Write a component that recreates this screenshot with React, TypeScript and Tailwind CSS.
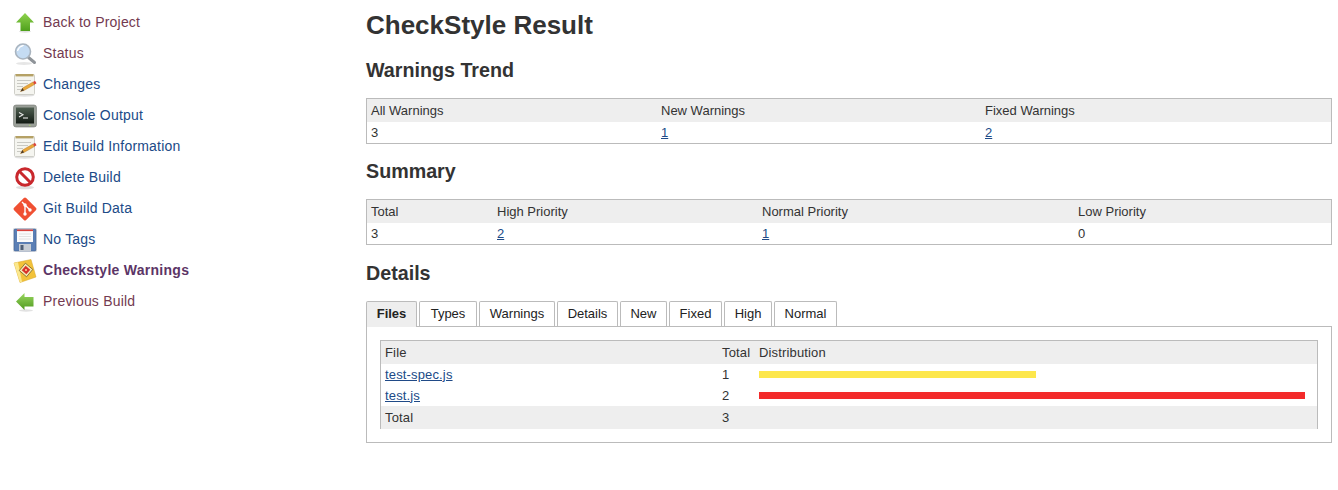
import React from 'react';

const UpArrow = () => (
  <svg width="24" height="24" viewBox="0 0 24 24">
    <defs>
      <linearGradient id="upGreen" x1="0" y1="0" x2="0" y2="1">
        <stop offset="0" stopColor="#8fd34e" />
        <stop offset="1" stopColor="#4fa01c" />
      </linearGradient>
    </defs>
    <ellipse cx="12" cy="20.5" rx="6" ry="1.2" fill="#e0e0e0" />
    <path d="M12 2 L21 11.5 L17 11.5 L17 20 L7.5 20 L7.5 11.5 L3 11.5 Z" fill="url(#upGreen)" />
  </svg>
);

const LeftArrow = () => (
  <svg width="24" height="24" viewBox="0 0 24 24">
    <defs>
      <linearGradient id="leftGreen" x1="0" y1="0" x2="0" y2="1">
        <stop offset="0" stopColor="#9ad760" />
        <stop offset="1" stopColor="#4f9a1f" />
      </linearGradient>
    </defs>
    <ellipse cx="13" cy="20.5" rx="7" ry="1.2" fill="#e2e2e2" />
    <path d="M3 11.5 L11.5 3 L11.5 7 L20.5 7 L20.5 16.5 L11.5 16.5 L11.5 20 Z" fill="url(#leftGreen)" />
  </svg>
);

const Search = () => (
  <svg width="24" height="24" viewBox="0 0 24 24">
    <ellipse cx="11" cy="21.5" rx="8" ry="1.5" fill="#e6e6e6" />
    <path d="M15.5 15.5 L21.5 20.5" stroke="#8f9499" strokeWidth="3" strokeLinecap="round" />
    <circle cx="10" cy="9.5" r="7.5" fill="#c5dcf3" stroke="#a9b4bf" strokeWidth="1.6" />
    <path d="M4.5 9 A6 6 0 0 1 10.5 3.5 A8 8 0 0 0 4.5 9 Z" fill="#ffffff" stroke="#ffffff" strokeWidth="1" />
  </svg>
);

const Notepad = () => (
  <svg width="24" height="24" viewBox="0 0 24 24">
    <ellipse cx="11.5" cy="22.5" rx="10" ry="1.2" fill="#e0e0e0" />
    <rect x="1.5" y="1.5" width="20" height="20" rx="1" fill="#f5f5f0" stroke="#c4c4bc" strokeWidth="0.8" />
    <rect x="2.5" y="1" width="18" height="2.4" fill="#b5a165" />
    <path d="M4 7.5 H18 M4 10.5 H15 M4 13.5 H10 M4 16.5 H8" stroke="#c9c9c3" strokeWidth="1" />
    <path d="M7.5 18.5 L9.5 15 L20 9 L21.5 11.5 L11 17.5 Z" fill="#eaa83c" stroke="#a9701f" strokeWidth="0.4" />
    <path d="M20 9 L21.5 11.5 L23.5 10.3 L22 7.8 Z" fill="#d9453a" />
    <path d="M7.5 18.5 L9.5 15 L11 17.5 Z" fill="#4a3a2a" />
  </svg>
);

const Terminal = () => (
  <svg width="24" height="24" viewBox="0 0 24 24">
    <defs>
      <linearGradient id="screen" x1="0" y1="0" x2="0" y2="1">
        <stop offset="0" stopColor="#4e5e50" />
        <stop offset="1" stopColor="#121a14" />
      </linearGradient>
    </defs>
    <rect x="0.5" y="1" width="23" height="22" rx="2.5" fill="#9a9f98" stroke="#777b75" strokeWidth="0.6" />
    <rect x="3" y="3.5" width="18" height="16" fill="url(#screen)" />
    <path d="M6 8.5 L10 10.8 L6 13" fill="none" stroke="#e8e8e8" strokeWidth="1.1" />
    <path d="M10 14 H15" stroke="#e8e8e8" strokeWidth="1.1" />
    <rect x="16" y="20.8" width="1.5" height="1" fill="#a8d46a" />
  </svg>
);

const NoEntry = () => (
  <svg width="24" height="24" viewBox="0 0 24 24">
    <ellipse cx="12" cy="21.5" rx="9" ry="1.8" fill="#e0e0e0" />
    <circle cx="12" cy="11" r="8.3" fill="#ffffff" stroke="#c9282d" strokeWidth="3" />
    <path d="M6.3 5.3 L17.7 16.7" stroke="#c9282d" strokeWidth="3" />
  </svg>
);

const GitLogo = () => (
  <svg width="24" height="24" viewBox="0 0 24 24">
    <rect x="3.5" y="3.5" width="17" height="17" rx="1.6" transform="rotate(45 12 12)" fill="#f05033" />
    <path d="M9 5 L17.5 13.5 M12 8 V17" stroke="#ffffff" strokeWidth="1.4" fill="none" />
    <circle cx="12" cy="8" r="1.7" fill="#ffffff" />
    <circle cx="17" cy="13" r="1.7" fill="#ffffff" />
    <circle cx="12" cy="17" r="1.7" fill="#ffffff" />
  </svg>
);

const Floppy = () => (
  <svg width="24" height="24" viewBox="0 0 24 24">
    <rect x="0" y="0" width="24" height="24" fill="#ececec" />
    <rect x="1" y="1" width="22" height="22" rx="1" fill="#5b7fb5" stroke="#3f5f92" strokeWidth="0.6" />
    <rect x="4" y="1.5" width="16" height="12.5" fill="#fbfbfb" />
    <rect x="4" y="1.5" width="16" height="1.6" fill="#d9403a" />
    <path d="M6 6 H18 M6 8.5 H18 M6 11 H18" stroke="#dcdcdc" strokeWidth="0.8" />
    <rect x="6" y="16" width="12" height="7" fill="#c6ccd4" />
    <rect x="7.5" y="17" width="3" height="5" fill="#4f5f76" />
  </svg>
);

const Checkstyle = () => (
  <svg width="24" height="24" viewBox="0 0 24 24">
    <path d="M1 4 L18 0.5 L23 18 L7 23.5 Z" fill="#f2c23a" stroke="#d6a526" strokeWidth="0.5" />
    <path d="M1 4 L5 3.2 L9 22.8 L7 23.5 Z" fill="#fbe88e" />
    <rect x="8.2" y="6.2" width="9.6" height="9.6" transform="rotate(40 13 11)" fill="#f6e9b4" stroke="#6b5a26" strokeWidth="0.7" />
    <rect x="10" y="8" width="6" height="6" transform="rotate(40 13 11)" fill="#d8322c" />
    <circle cx="13" cy="11" r="0.9" fill="#ffe9a0" />
  </svg>
);

const navItems = [
  { label: 'Back to Project', icon: <UpArrow />, color: 'text-[#733a50] tracking-[0.2px]' },
  { label: 'Status', icon: <Search />, color: 'text-[#733a50] tracking-[0.2px]' },
  { label: 'Changes', icon: <Notepad />, color: 'text-[#204a87] tracking-[0.2px]' },
  { label: 'Console Output', icon: <Terminal />, color: 'text-[#204a87] tracking-[0.2px]' },
  { label: 'Edit Build Information', icon: <Notepad />, color: 'text-[#204a87] tracking-[0.2px]' },
  { label: 'Delete Build', icon: <NoEntry />, color: 'text-[#204a87] tracking-[0.2px]' },
  { label: 'Git Build Data', icon: <GitLogo />, color: 'text-[#204a87] tracking-[0.2px]' },
  { label: 'No Tags', icon: <Floppy />, color: 'text-[#204a87] tracking-[0.2px]' },
  { label: 'Checkstyle Warnings', icon: <Checkstyle />, color: 'text-[#5c3566] font-bold tracking-[0.27px]' },
  { label: 'Previous Build', icon: <LeftArrow />, color: 'text-[#733a50] tracking-[0.2px]' },
];

const tabs = [
  { label: 'Types', width: 'w-[58px]' },
  { label: 'Warnings', width: 'w-[76px]' },
  { label: 'Details', width: 'w-[61px]' },
  { label: 'New', width: 'w-[47px]' },
  { label: 'Fixed', width: 'w-[53px]' },
  { label: 'High', width: 'w-[48px]' },
  { label: 'Normal', width: 'w-[63px]' },
];

const StatLink = ({ children }: { children: React.ReactNode }) => (
  <a href="#" className="text-[#204a87] underline">{children}</a>
);

const StatTable = ({ cols, head, row }: { cols: string; head: string[]; row: React.ReactNode[] }) => (
  <div className="border border-[#bbbbbb] text-[13px] text-[#333333]">
    <div className={`grid ${cols} h-[23px] items-center bg-[#eeeeee]`}>
      {head.map((h) => <div key={h} className="pl-[4px]">{h}</div>)}
    </div>
    <div className={`grid ${cols} h-[21px] items-center bg-white`}>
      {row.map((c, i) => <div key={i} className="pl-[4px]">{c}</div>)}
    </div>
  </div>
);

export default function App() {
  return (
    <div className="flex h-[490px] w-[1338px] overflow-hidden bg-white font-['Liberation_Sans',Arial,sans-serif] text-[14px] text-[#333333]">
      <aside className="w-[366px] shrink-0 pl-[13px] pt-[7px]">
        {navItems.map((item) => (
          <div key={item.label} className="flex h-[31px] items-center gap-[6px]">
            <span className="flex h-[24px] w-[24px] shrink-0">{item.icon}</span>
            <a href="#" className={item.color}>{item.label}</a>
          </div>
        ))}
      </aside>
      <main className="w-[966px] shrink-0">
        <h1 className="mt-[10px] h-[30px] text-[26px] font-bold leading-[30px]">CheckStyle Result</h1>
        <h2 className="mt-[18px] h-[24px] text-[19.7px] font-bold leading-[24px]">Warnings Trend</h2>
        <div className="mt-[16px]">
          <StatTable
            cols="grid-cols-[290px_324px_1fr]"
            head={['All Warnings', 'New Warnings', 'Fixed Warnings']}
            row={['3', <StatLink>1</StatLink>, <StatLink>2</StatLink>]}
          />
        </div>
        <h2 className="mt-[15px] h-[24px] text-[19.7px] font-bold leading-[24px]">Summary</h2>
        <div className="mt-[16px]">
          <StatTable
            cols="grid-cols-[126px_265px_316px_1fr]"
            head={['Total', 'High Priority', 'Normal Priority', 'Low Priority']}
            row={['3', <StatLink>2</StatLink>, <StatLink>1</StatLink>, '0']}
          />
        </div>
        <h2 className="mt-[16px] h-[24px] text-[19.7px] font-bold leading-[24px]">Details</h2>
        <div className="mt-[16px] flex h-[25px] gap-[2px] text-[13px] text-[#222222]">
          <div className="relative z-10 flex h-[26px] w-[51px] items-center justify-center rounded-t-[2px] border border-b-0 border-[#bbbbbb] bg-[#eeeeee] pb-[1px] font-bold">
            Files
          </div>
          {tabs.map((t) => (
            <div
              key={t.label}
              className={`flex h-[25px] ${t.width} items-center justify-center rounded-t-[2px] border border-b-0 border-[#bbbbbb] bg-white`}
            >
              {t.label}
            </div>
          ))}
        </div>
        <div className="border border-[#bbbbbb] p-[13px]">
          <div className="border border-b-0 border-[#bbbbbb] text-[13px] tracking-[0.15px]">
            <div className="grid h-[23px] grid-cols-[341px_37px_1fr] items-center bg-[#eeeeee]">
              <div className="pl-[4px]">File</div>
              <div>Total</div>
              <div>Distribution</div>
            </div>
            <div className="grid h-[21px] grid-cols-[341px_37px_1fr] items-center bg-white">
              <div className="pl-[4px]"><StatLink>test-spec.js</StatLink></div>
              <div>1</div>
              <div className="h-[7px] w-[277px] bg-[#fde74c]" />
            </div>
            <div className="grid h-[21px] grid-cols-[341px_37px_1fr] items-center bg-white">
              <div className="pl-[4px]"><StatLink>test.js</StatLink></div>
              <div>2</div>
              <div className="h-[7px] w-[546px] bg-[#f32b2b]" />
            </div>
            <div className="grid h-[23px] grid-cols-[341px_37px_1fr] items-center bg-[#eeeeee]">
              <div className="pl-[4px]">Total</div>
              <div>3</div>
              <div />
            </div>
          </div>
        </div>
      </main>
    </div>
  );
}
